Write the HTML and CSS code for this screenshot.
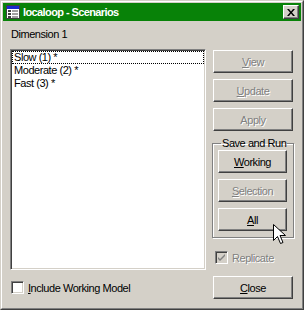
FILE: index.html
```html
<!DOCTYPE html>
<html>
<head>
  <meta charset="UTF-8">
  <title>localoop - Scenarios</title>
  <link rel="stylesheet" href="styles.css">
</head>
<body>
  <div class="window">
    <div class="frame">
      <div class="titlebar">
        <svg class="app-icon" width="14" height="14" viewBox="0 0 14 14">
          <rect x="0.5" y="0.5" width="13" height="13" fill="#fff" stroke="#404040"/>
          <rect x="1" y="1" width="12" height="3" fill="#1a2ad0"/>
          <rect x="2" y="5" width="3" height="2" fill="#404040"/>
          <rect x="6" y="5" width="6" height="2" fill="#a0a0a0"/>
          <rect x="2" y="8" width="3" height="2" fill="#404040"/>
          <rect x="6" y="8" width="6" height="2" fill="#a0a0a0"/>
          <rect x="2" y="11" width="3" height="2" fill="#404040"/>
          <rect x="6" y="11" width="6" height="2" fill="#a0a0a0"/>
        </svg>
        <span class="title">localoop - Scenarios</span>
        <div class="close-btn">
          <svg width="8" height="7" viewBox="0 0 8 7">
            <path d="M0 0h2l2 2.5 2-2.5h2l-3 3.5 3 3.5h-2l-2-2.5-2 2.5h-2l3-3.5z" fill="#000"/>
          </svg>
        </div>
      </div>

      <div class="content">
        <div class="left">
          <div class="label">Dimension 1</div>
          <div class="listbox">
            <div class="item focused">Slow (1) *</div>
            <div class="item">Moderate (2) *</div>
            <div class="item">Fast (3) *</div>
          </div>
          <div class="check">
            <span class="box"></span>
            <span><u>I</u>nclude Working Model</span>
          </div>
        </div>

        <div class="right">
          <div class="btn disabled"><span><u>V</u>iew</span></div>
          <div class="btn disabled"><span><u>U</u>pdate</span></div>
          <div class="btn disabled"><span>Apply</span></div>

          <fieldset class="group">
            <legend>Save and Run</legend>
            <div class="btn small"><span><u>W</u>orking</span></div>
            <div class="btn small disabled"><span><u>S</u>election</span></div>
            <div class="btn small"><span><u>A</u>ll</span></div>
          </fieldset>

          <div class="check disabled replicate">
            <span class="box">
              <svg width="9" height="9" viewBox="0 0 9 9">
                <path d="M1 4l2 2 5-5v2l-5 5-2-2z" fill="#808080"/>
              </svg>
            </span>
            <span>Replicate</span>
          </div>

          <div class="btn close"><span><u>C</u>lose</span></div>
        </div>
      </div>
    </div>

    <!-- mouse pointer hovering the All button -->
    <svg class="cursor" width="13" height="21" viewBox="0 0 13 21">
      <path d="M0.5 0.5v16l4-4 3 7 2.5-1-3-7h5.5z" fill="#fff" stroke="#000" stroke-width="1"/>
    </svg>
  </div>
</body>
</html>
```

FILE: styles.css
```css
body {
  margin: 0;
  font-family: "Liberation Sans", Arial, sans-serif;
  font-size: 11px;
  letter-spacing: -0.45px;
  color: #000;
}
.window {
  position: relative;
  width: 304px;
  height: 310px;
  box-sizing: border-box;
  background: #d4d0c8;
  border: 1px solid;
  border-color: #d4d0c8 #404040 #404040 #d4d0c8;
}
.frame {
  height: 100%;
  box-sizing: border-box;
  border: 1px solid;
  border-color: #fff #808080 #808080 #fff;
  padding: 1px;
}
.titlebar {
  height: 18px;
  background: #088208;
  display: flex;
  align-items: center;
  padding: 0 2px 0 3px;
}
.app-icon {
  flex: none;
}
.title {
  flex: 1;
  margin-left: 3px;
  color: #fff;
  font-weight: bold;
  font-size: 11px;
  letter-spacing: -0.6px;
  white-space: nowrap;
}
.close-btn {
  width: 16px;
  height: 14px;
  box-sizing: border-box;
  background: #d4d0c8;
  border: 1px solid;
  border-color: #fff #404040 #404040 #fff;
  box-shadow: inset -1px -1px 0 #808080;
  display: flex;
  align-items: center;
  justify-content: center;
}
.content {
  display: flex;
  padding: 7px 7px 0 7px;
}
.left {
  width: 196px;
}
.label {
  height: 13px;
  line-height: 13px;
  padding-left: 1px;
}
.listbox {
  margin-top: 8px;
  height: 221px;
  box-sizing: border-box;
  background: #fff;
  border: 1px solid;
  border-color: #808080 #fff #fff #808080;
  box-shadow: inset 1px 1px 0 #404040, inset -1px -1px 0 #d4d0c8;
  padding: 1px;
}
.item {
  height: 13px;
  line-height: 13px;
  padding-left: 2px;
  box-sizing: border-box;
}
.item.focused {
  outline: 1px dotted #000;
  outline-offset: -1px;
}
.check {
  display: flex;
  align-items: center;
  margin-top: 11px;
  padding-left: 1px;
  height: 13px;
}
.box {
  width: 13px;
  height: 13px;
  box-sizing: border-box;
  background: #fff;
  border: 1px solid;
  border-color: #808080 #fff #fff #808080;
  box-shadow: inset 1px 1px 0 #404040, inset -1px -1px 0 #d4d0c8;
  margin-right: 4px;
  display: flex;
  align-items: center;
  justify-content: center;
}
.right {
  width: 80px;
  margin-left: 7px;
  padding-top: 22px;
}
.btn {
  height: 23px;
  box-sizing: border-box;
  border: 1px solid;
  border-color: #fff #404040 #404040 #fff;
  box-shadow: inset -1px -1px 0 #808080;
  display: flex;
  align-items: center;
  justify-content: center;
  margin-bottom: 6px;
}
.btn.disabled,
.check.disabled {
  color: #808080;
  text-shadow: 1px 1px 0 #fff;
}
.group {
  width: 82px;
  min-width: 0;
  box-sizing: border-box;
  margin: 3px -1px 0 -1px;
  padding: 0 6px 6px 5px;
  border: 1px solid #808080;
  box-shadow: 1px 1px 0 #fff, inset 1px 1px 0 #fff;
}
.group legend {
  padding: 0 1px;
  margin-left: 3px;
  line-height: 13px;
  white-space: nowrap;
}
.group .btn:last-child {
  margin-bottom: 0;
}
.replicate {
  margin-top: 13px;
  margin-left: 1px;
}
.replicate .box {
  background: #d4d0c8;
}
.btn.close {
  margin-top: 12px;
}
.cursor {
  position: absolute;
  left: 272px;
  top: 223px;
}
```
